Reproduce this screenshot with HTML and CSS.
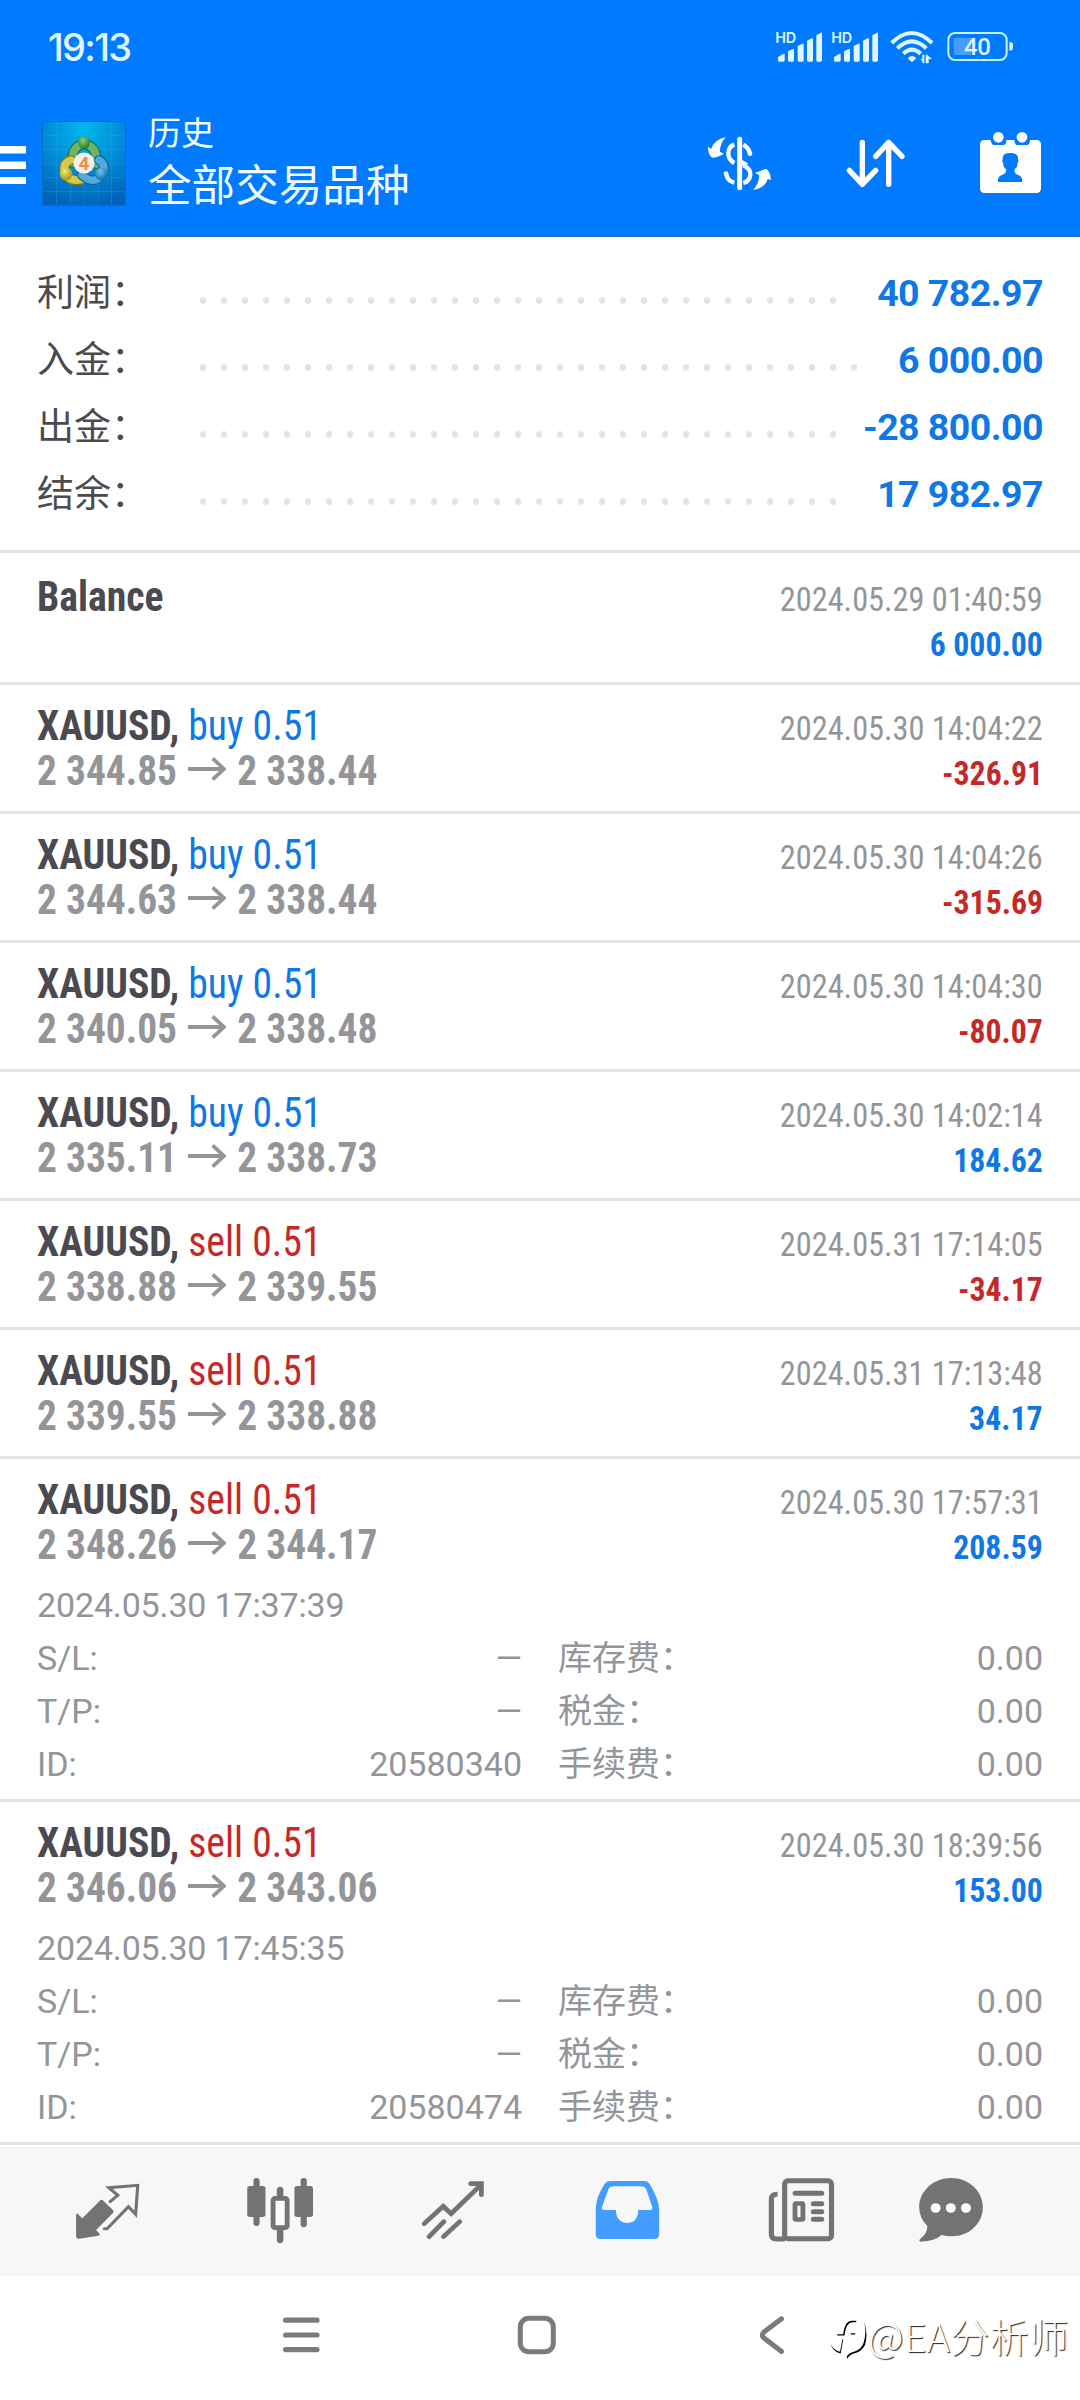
FILE: index.html
```html
<!DOCTYPE html>
<html lang="zh-CN">
<head>
<meta charset="utf-8">
<title>历史</title>
<link rel="stylesheet" href="styles.css">
</head>
<body>
<header class="header">
  <div class="status">
    <span class="clock">19:13</span>
    <svg class="status-icons" width="238" height="36" viewBox="288 87 714 108" fill="#e0f6ff">
      <g id="signal">
        <text class="hd" x="286" y="129">HD</text>
        <path d="M294 171l17-10q3-1 3 2v18q0 4-4 4h-12q-4 0-4-4zM324 154l14-7q4-1 4 2v32q0 4-4 4h-10q-4 0-4-4zM353 138l14-7q4-1 4 2v48q0 4-4 4h-10q-4 0-4-4zM381 122l14-7q4-1 4 2v64q0 4-4 4h-10q-4 0-4-4zM409 106l14-8q3-1 3 2v81q0 4-4 4h-9q-4 0-4-4z"/>
      </g>
      <use href="#signal" x="168"/>
      <g fill="none" stroke="#e0f6ff" stroke-width="12">
        <path d="M635 129Q695 69 756 129M652 145Q695 103 739 145M670 161Q695 137 722 161"/>
      </g>
      <path d="M683 175q13-14 26 0l-13 12zM722 176h5v-12h6v26h-4zM737 190v-26h4l15 13h-10v13z"/>
      <rect x="805" y="99" width="175" height="81" rx="20" fill="none" stroke="#c5f2ff" stroke-width="6"/>
      <path d="M827 113h46v52h-46q-6 0-6-6v-40q0-6 6-6z" fill="#479cff"/>
      <path d="M988 126q11 0 11 8v10q0 8-11 8z"/>
      <text class="charge" x="852" y="166">40</text>
    </svg>
  </div>
  <div class="appbar">
    <svg class="menu" width="26" height="38" viewBox="0 0 26 38" fill="#fff"><path d="M0 0h26v7.5H0zM0 15.500h26V23H0zM0 31h26v7.500H0z"/></svg>
    <svg class="logo" width="84" height="85" viewBox="0 0 84 85">
      <defs>
        <radialGradient id="bg" cx=".5" cy=".1" r=".95"><stop offset="0" stop-color="#00b8ea"/><stop offset=".5" stop-color="#008bd8"/><stop offset="1" stop-color="#0060b8"/></radialGradient>
        <radialGradient id="gr" cx=".4" cy=".3" r=".7"><stop offset="0" stop-color="#8ccf6c"/><stop offset="1" stop-color="#1d7a2c"/></radialGradient>
        <radialGradient id="ye" cx=".4" cy=".3" r=".7"><stop offset="0" stop-color="#f5ee7a"/><stop offset="1" stop-color="#9c9412"/></radialGradient>
        <radialGradient id="bl" cx=".4" cy=".3" r=".7"><stop offset="0" stop-color="#6fc3f2"/><stop offset="1" stop-color="#0c6cab"/></radialGradient>
      </defs>
      <rect x=".5" y=".5" width="83" height="84" fill="url(#bg)" stroke="#0a6cba"/>
      <path d="M14.500 1v83M28.500 1v83M42 1v83M56 1v83M69.500 1v83M1 14.500h82M1 28.500h82M1 42.500h82M1 56.500h82M1 70.500h82" stroke="#37a8e8" stroke-opacity=".28" fill="none"/>
      <g fill="none" stroke-linecap="round">
        <path d="M31 42Q28 26 42 23Q56 25 54 43" stroke="#2c6b35" stroke-width="10"/>
        <path d="M31 42Q28 26 42 23Q56 25 54 43" stroke="#6db36a" stroke-width="7.500"/>
        <path d="M29 39Q20 42 23 52Q28 62 42 58" stroke="#837d16" stroke-width="10"/>
        <path d="M29 39Q20 42 23 52Q28 62 42 58" stroke="#d2ca48" stroke-width="7.500"/>
        <path d="M57 39Q64 43 61 53Q52 65 40 54" stroke="#12639c" stroke-width="10"/>
        <path d="M57 39Q64 43 61 53Q52 65 40 54" stroke="#4fabde" stroke-width="7.500"/>
      </g>
      <ellipse cx="42" cy="22" rx="5.800" ry="6.500" fill="url(#gr)"/>
      <ellipse cx="24" cy="53" rx="6.300" ry="6.500" fill="url(#ye)"/>
      <ellipse cx="59.500" cy="53" rx="6.300" ry="6.500" fill="url(#bl)"/>
      <circle cx="42" cy="42" r="10.500" fill="#f4f0ee"/>
      <text class="logo-digit" x="42" y="49" text-anchor="middle">4</text>
    </svg>
    <div class="titles">
      <div class="title-small">历史</div>
      <div class="title-main">全部交易品种</div>
    </div>
    <div class="actions">
      <svg width="70" height="70" viewBox="75 390 210 210" fill="none">
        <path d="M179 418V563" stroke="#fff" stroke-width="15" stroke-linecap="round"/>
        <path d="M163 434Q145 440 145 460Q145 480 163 489M190 434Q205 441 210 461M190 496Q212 506 211 524Q208 545 190 549M139 521Q141 543 163 548" stroke="#fff" stroke-width="13"/>
        <path d="M179 484L200 496" stroke="#fff" stroke-width="15"/>
        <circle cx="210" cy="461" r="7" fill="#fff"/><circle cx="138" cy="521" r="7" fill="#fff"/>
        <path d="M138 411Q101 419 94 447L84 440Q84 462 94 471Q102 477 132 461L120 455Q119 430 138 411zM219 570Q258 562 263 536L273 541Q271 513 258 506L225 519L237 525Q239 548 219 570z" fill="#fff"/>
      </svg>
      <svg width="70" height="70" viewBox="480 390 210 210" fill="none" stroke="#fff" stroke-width="16" stroke-linecap="round" stroke-linejoin="round"><path d="M547 427V553M508 511L547 553L587 511M626 553V427M587 469L626 427L666 469"/></svg>
      <svg width="70" height="70" viewBox="885 390 210 210" fill="#fff">
        <path d="M913 420H932Q934 435 942 435H970Q979 435 979 420H1003Q1004 435 1012 435H1041Q1049 435 1050 420H1069Q1083 420 1083 434V565Q1083 579 1069 579H913Q900 579 900 565V434Q900 420 913 420z"/>
        <circle cx="955" cy="412" r="16"/><circle cx="1026" cy="412" r="16"/>
        <path d="M954 546Q953 528 966 525Q981 520 978 508Q968 500 970 491Q965 484 968 478Q966 459 991 459Q1016 459 1014 478Q1017 484 1012 491Q1014 500 1004 508Q1001 520 1015 525Q1028 529 1026 546z" fill="#007aff"/>
      </svg>
    </div>
  </div>
</header>

<section class="summary">
  <div class="sum-row"><span class="sum-label">利润：</span><span class="leader"></span><b class="sum-value">40 782.97</b></div>
  <div class="sum-row"><span class="sum-label">入金：</span><span class="leader"></span><b class="sum-value">6 000.00</b></div>
  <div class="sum-row"><span class="sum-label">出金：</span><span class="leader"></span><b class="sum-value">-28 800.00</b></div>
  <div class="sum-row"><span class="sum-label">结余：</span><span class="leader"></span><b class="sum-value">17 982.97</b></div>
</section>

<svg class="defs" width="0" height="0"><symbol id="arrow" viewBox="0 0 39 30"><path d="M0 15H36M25 5L36.500 15L25 25" fill="none" stroke="#949599" stroke-width="3.600"/></symbol></svg>

<main class="deals">
  <article class="deal balance">
    <div class="line"><b class="symbol">Balance</b><span class="time">2024.05.29 01:40:59</span></div>
    <div class="line"><span>&nbsp;</span><b class="profit buy">6 000.00</b></div>
  </article>
  <article class="deal">
    <div class="line"><span class="symbol"><b>XAUUSD,</b> <span class="buy">buy 0.51</span></span><span class="time">2024.05.30 14:04:22</span></div>
    <div class="line"><b class="prices">2 344.85 <svg class="arrow"><use href="#arrow"/></svg> 2 338.44</b><b class="profit sell">-326.91</b></div>
  </article>
  <article class="deal">
    <div class="line"><span class="symbol"><b>XAUUSD,</b> <span class="buy">buy 0.51</span></span><span class="time">2024.05.30 14:04:26</span></div>
    <div class="line"><b class="prices">2 344.63 <svg class="arrow"><use href="#arrow"/></svg> 2 338.44</b><b class="profit sell">-315.69</b></div>
  </article>
  <article class="deal">
    <div class="line"><span class="symbol"><b>XAUUSD,</b> <span class="buy">buy 0.51</span></span><span class="time">2024.05.30 14:04:30</span></div>
    <div class="line"><b class="prices">2 340.05 <svg class="arrow"><use href="#arrow"/></svg> 2 338.48</b><b class="profit sell">-80.07</b></div>
  </article>
  <article class="deal">
    <div class="line"><span class="symbol"><b>XAUUSD,</b> <span class="buy">buy 0.51</span></span><span class="time">2024.05.30 14:02:14</span></div>
    <div class="line"><b class="prices">2 335.11 <svg class="arrow"><use href="#arrow"/></svg> 2 338.73</b><b class="profit buy">184.62</b></div>
  </article>
  <article class="deal">
    <div class="line"><span class="symbol"><b>XAUUSD,</b> <span class="sell">sell 0.51</span></span><span class="time">2024.05.31 17:14:05</span></div>
    <div class="line"><b class="prices">2 338.88 <svg class="arrow"><use href="#arrow"/></svg> 2 339.55</b><b class="profit sell">-34.17</b></div>
  </article>
  <article class="deal">
    <div class="line"><span class="symbol"><b>XAUUSD,</b> <span class="sell">sell 0.51</span></span><span class="time">2024.05.31 17:13:48</span></div>
    <div class="line"><b class="prices">2 339.55 <svg class="arrow"><use href="#arrow"/></svg> 2 338.88</b><b class="profit buy">34.17</b></div>
  </article>
  <article class="deal expanded">
    <div class="line"><span class="symbol"><b>XAUUSD,</b> <span class="sell">sell 0.51</span></span><span class="time">2024.05.30 17:57:31</span></div>
    <div class="line"><b class="prices">2 348.26 <svg class="arrow"><use href="#arrow"/></svg> 2 344.17</b><b class="profit buy">208.59</b></div>
    <div class="details">
      <div class="opened">2024.05.30 17:37:39</div>
      <div class="pair"><span>S/L:</span><span>—</span></div><div class="pair"><span>库存费：</span><span>0.00</span></div>
      <div class="pair"><span>T/P:</span><span>—</span></div><div class="pair"><span>税金：</span><span>0.00</span></div>
      <div class="pair"><span>ID:</span><span>20580340</span></div><div class="pair"><span>手续费：</span><span>0.00</span></div>
    </div>
  </article>
  <article class="deal expanded">
    <div class="line"><span class="symbol"><b>XAUUSD,</b> <span class="sell">sell 0.51</span></span><span class="time">2024.05.30 18:39:56</span></div>
    <div class="line"><b class="prices">2 346.06 <svg class="arrow"><use href="#arrow"/></svg> 2 343.06</b><b class="profit buy">153.00</b></div>
    <div class="details">
      <div class="opened">2024.05.30 17:45:35</div>
      <div class="pair"><span>S/L:</span><span>—</span></div><div class="pair"><span>库存费：</span><span>0.00</span></div>
      <div class="pair"><span>T/P:</span><span>—</span></div><div class="pair"><span>税金：</span><span>0.00</span></div>
      <div class="pair"><span>ID:</span><span>20580474</span></div><div class="pair"><span>手续费：</span><span>0.00</span></div>
    </div>
  </article>
</main>

<nav class="tabs">
  <svg viewBox="194.600 90 232.300 240" preserveAspectRatio="none">
    <path d="M221 224Q221 217 227 223L239 235L290 182Q295 177 300 182L328 210Q332 215 328 219L279 270L288 280Q293 286 285 287L231 296Q221 298 221 288z" fill="#737373"/>
    <path d="M320 185L342 166L316 143L400 136L394 223L373 200L311 266H303" fill="none" stroke="#737373" stroke-width="9" stroke-linecap="round"/>
  </svg>
  <svg viewBox="697 90 232.300 240" preserveAspectRatio="none" fill="#737373">
    <rect x="718" y="138" width="53" height="93" rx="8"/><rect x="736" y="114" width="18" height="144" rx="9"/>
    <rect x="855" y="138" width="54" height="93" rx="8"/><rect x="873" y="114" width="18" height="148" rx="9"/>
    <path d="M804 168V149Q805 140 813 140Q822 140 823 149V168zM804 268V300Q805 310 813 310Q822 310 823 300V268z"/>
    <rect x="793" y="175" width="41" height="88" rx="6" fill="#fafafa" stroke="#737373" stroke-width="14"/>
  </svg>
  <svg viewBox="1199.400 90 232.300 240" preserveAspectRatio="none" fill="none" stroke="#737373" stroke-width="14" stroke-linecap="round">
    <path d="M1232 251L1287 199L1310 221L1398 133M1367 131H1398V164M1246 290L1289 245M1288 290L1335 245"/>
  </svg>
  <svg viewBox="133.600 90 232.300 240" preserveAspectRatio="none">
    <path d="M203 123H304Q313 123 318 131Q346 178 346 210V282Q346 297 331 297H176Q162 297 162 282V208Q162 171 188 131Q193 123 203 123z" fill="#439cff"/>
    <path d="M214 139H293Q305 139 309 149L326 201Q328 210 319 210H285V220Q280 249 253 249Q225 248 221 220V210H188Q178 210 180 201L198 149Q202 139 214 139z" fill="#f7f8f8"/>
  </svg>
  <svg viewBox="638.900 90 232.300 240" preserveAspectRatio="none" fill="none" stroke="#737373" stroke-width="15" stroke-linecap="round">
    <rect x="710.500" y="122.500" width="136" height="174" rx="10"/>
    <path d="M690 163Q672 162 672 177V284Q673 297 686 297H711" stroke-linecap="butt"/>
    <path d="M741 160H818M794 191H818M794 215H818M794 238H818"/>
    <rect x="740.500" y="190.500" width="23" height="48" rx="3" stroke-width="14"/>
  </svg>
  <svg viewBox="1074.500 90 232.300 240" preserveAspectRatio="none">
    <path d="M1194 114C1245 114 1286 153 1286 202C1286 251 1246 289 1197 289Q1180 289 1166 285Q1146 304 1106 305Q1099 304 1103 298Q1125 282 1125 258Q1101 234 1101 201C1102 152 1143 114 1194 114z" fill="#737373"/>
    <g fill="#fff"><circle cx="1149" cy="204" r="14.500"/><circle cx="1193" cy="204" r="14.500"/><circle cx="1237" cy="204" r="14.500"/></g>
  </svg>
</nav>

<footer class="sysnav">
  <svg width="37" height="40" viewBox="0 0 37 40" fill="none" stroke="#7b7b7b" stroke-width="5.200" stroke-linecap="round"><path d="M2.600 5.200H34M2.600 20H34M2.600 34.600H34"/></svg>
  <svg width="40" height="40" viewBox="0 0 40 40" fill="none" stroke="#7b7b7b" stroke-width="5"><rect x="3.300" y="3.300" width="33" height="33.500" rx="8.500"/></svg>
  <svg width="26" height="40" viewBox="0 0 26 40" fill="none" stroke="#7b7b7b" stroke-width="5" stroke-linecap="round"><path d="M22.500 3.800L5 17Q1.500 20 5 23L22.500 36.500"/></svg>
  <div class="watermark">
    <svg width="38" height="42" viewBox="842 553 110 122" preserveAspectRatio="none">
      <path d="M863 600H880Q884 562 904 561H918V565H906Q888 566 884 604H863zM902 597H915V601H902zM844 628Q852 647 871 651L878 614L880 616L873 656Q850 652 844 628zM941 563Q953 600 943 632Q931 653 911 656Q899 659 891 672V664Q897 654 911 651Q928 647 938 629Q949 600 941 563z"/>
    </svg>
    <span>@EA分析师</span>
  </div>
</footer>
</body>
</html>
```

FILE: styles.css
```css
* { box-sizing: border-box; }

body {
  margin: 0;
  width: 1080px;
  height: 2400px;
  overflow: hidden;
  background: #fff;
  color: #4a4a50;
  font-family: Roboto, "Noto Sans CJK SC", sans-serif;
}

svg { display: block; flex: none; }
.defs { display: none; }

.header {
  height: 237px;
  background: #007aff;
  border-bottom: 2px solid #1b70c4;
  color: #f2fcff;
}
.status {
  display: flex;
  align-items: center;
  justify-content: space-between;
  height: 94px;
  padding: 0 66px 0 48px;
}
.clock {
  font: 500 38px/44px Inter, sans-serif;
  letter-spacing: -1.700px;
  color: #e0f6ff;
}
.hd { font: 600 43px Inter, sans-serif; letter-spacing: -1px; }
.charge { font: 500 72px Roboto, sans-serif; letter-spacing: -1px; }

.appbar {
  display: flex;
  align-items: center;
  height: 142px;
  padding-right: 35px;
}
.logo { margin: -3px 0 0 16px; }
.logo-digit { font: 700 19px Roboto, sans-serif; fill: #f08a3c; }
.titles { margin-left: 22px; }
.title-small { font-size: 33px; line-height: 44px; }
.title-main { font-size: 43.600px; line-height: 62px; }
.actions { display: flex; gap: 65px; margin-left: auto; }

.summary {
  height: 316px;
  padding: 22px 37px 0;
  border-bottom: 3px solid #e4e4e4;
}
.sum-row { display: flex; align-items: center; height: 67px; }
.sum-label { width: 155px; padding-bottom: 5px; font-size: 37px; white-space: nowrap; }
.leader {
  flex: 1;
  height: 7px;
  margin: 15px 27px 0 0;
  background: radial-gradient(circle at 11px 3.5px, #e4e4e4 3px, transparent 3.6px) 0 0 / 21px 7px repeat-x;
}
.sum-value { font-size: 37.5px; color: #0f78e6; letter-spacing: -.55px; }

.deal {
  height: 129px;
  padding: 18px 37px 0;
  border-bottom: 3px solid #e4e4e4;
  font-stretch: 75%;
}
.deal.balance { height: 132px; padding-top: 21px; }
.deal.expanded { height: 343px; }
.line {
  display: flex;
  justify-content: space-between;
  align-items: baseline;
  height: 45px;
  line-height: 45px;
  font-size: 42px;
  font-family: "Roboto Condensed", Roboto, sans-serif;
}
/* Slightly narrower than the condensed cut */
.symbol { transform: scaleX(.945); transform-origin: left; }
.prices { transform: scaleX(.938); transform-origin: left; color: #949599; }
.arrow { display: inline-block; width: 41px; height: 32px; margin: 0 2px; }
.time { transform: scaleX(.95); transform-origin: right; font-size: 34px; color: #949599; }
.profit { transform: scaleX(.935); transform-origin: right; font-size: 34px; }
.buy { color: #0f78e6; }
.sell { color: #c62828; }

.details {
  display: grid;
  grid-template-columns: 1fr 1fr;
  column-gap: 36px;
  grid-auto-rows: 53px;
  margin-top: 12px;
  line-height: 53px;
  font-size: 34px;
  font-stretch: 100%;
  color: #949599;
}
.opened { grid-column: 1 / -1; letter-spacing: -.15px; }
.pair { display: flex; justify-content: space-between; }

.tabs {
  display: grid;
  grid-template-columns: 173px 173px 173px 174px 150px 80px;
  height: 129px;
  margin-top: 2px;
  padding: 23px 0 0 67px;
  background: #f7f7f7;
}
.tabs svg { width: 80px; height: 80px; }

.sysnav {
  display: flex;
  align-items: flex-start;
  height: 124px;
  padding: 39px 0 0 283px;
}
.sysnav > svg:nth-child(2) { margin-left: 197px; }
.sysnav > svg:nth-child(3) { margin-left: 202px; }
.watermark {
  display: flex;
  align-items: center;
  height: 60px;
  margin: -10px 0 0 45px;
  font: 300 39px/60px "Noto Sans CJK SC", sans-serif;
  letter-spacing: .5px;
  color: #fff;
  text-shadow: 1px 1px 1px #222;
  white-space: nowrap;
}
.watermark svg { margin-top: 8px; }
```
